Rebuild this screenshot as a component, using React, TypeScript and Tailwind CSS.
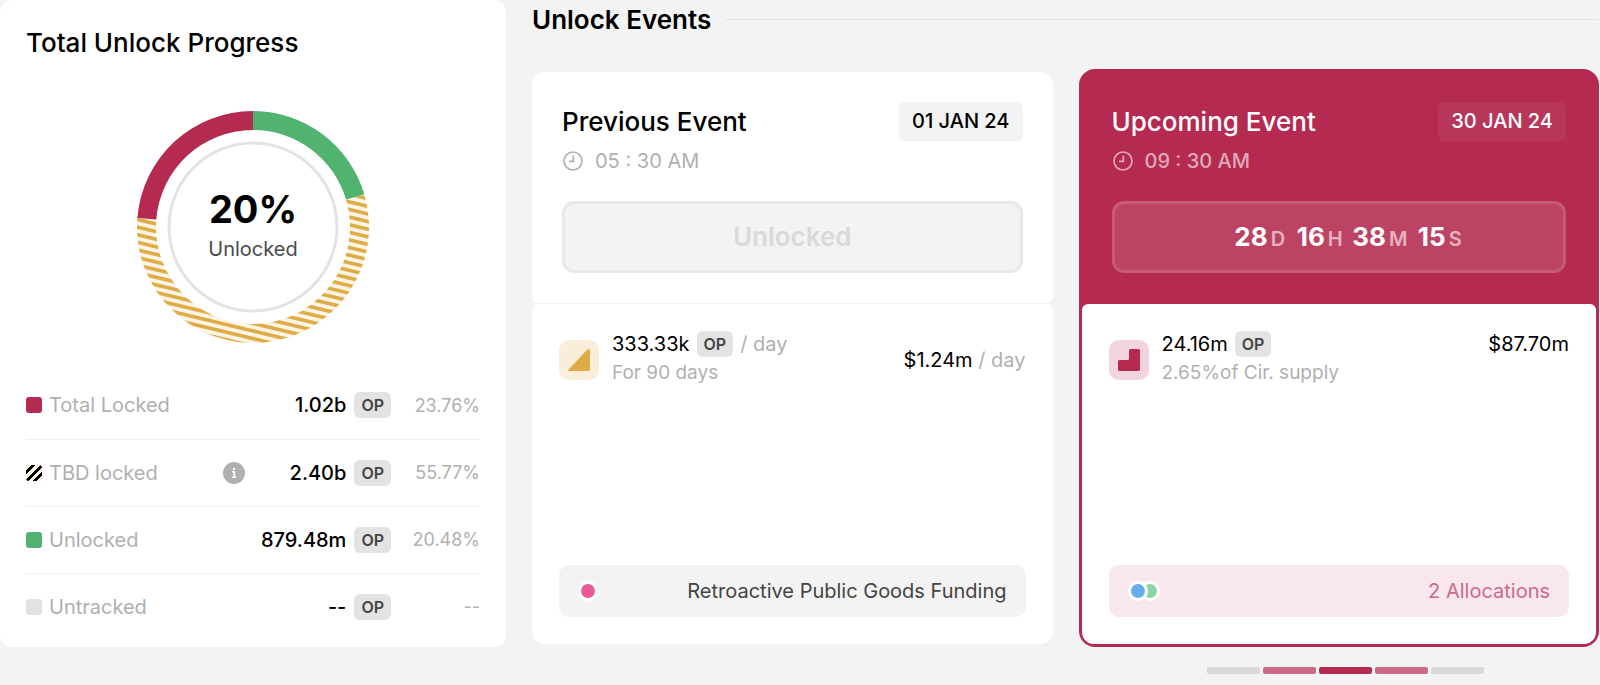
import clsx from 'clsx';
import type { ReactNode } from 'react';

interface ProgressRow {
  label: string;
  value: string;
  percent: string;
  swatch: string;
  info?: boolean;
}

const rows: ProgressRow[] = [
  { label: 'Total Locked', value: '1.02b', percent: '23.76%', swatch: 'bg-[#b42a50]' },
  {
    label: 'TBD locked',
    value: '2.40b',
    percent: '55.77%',
    swatch: 'bg-[repeating-linear-gradient(135deg,#000_0px,#000_1px,#faf3e0_1px,#faf3e0_4px,#000_4px,#000_6px)]',
    info: true,
  },
  { label: 'Unlocked', value: '879.48m', percent: '20.48%', swatch: 'bg-[#52b371]' },
  { label: 'Untracked', value: '--', percent: '--', swatch: 'bg-[#e2e2e2]' },
];

const countdown = [
  { value: '28', unit: 'D' },
  { value: '16', unit: 'H' },
  { value: '38', unit: 'M' },
  { value: '15', unit: 'S' },
];

const pages = ['bg-[#d9d9d9]', 'bg-[#cb6b88]', 'bg-[#b42a50]', 'bg-[#cb6b88]', 'bg-[#d9d9d9]'];

// Ring segment between two fractions of the full circle, starting at 12 o'clock
function arc(from: number, to: number, outer = 116, inner = 97) {
  const point = (fraction: number, radius: number) => {
    const angle = fraction * Math.PI * 2;
    return `${(116 + radius * Math.sin(angle)).toFixed(2)} ${(116 - radius * Math.cos(angle)).toFixed(2)}`;
  };
  const large = to - from > 0.5 ? 1 : 0;
  return `M${point(from, outer)}A${outer} ${outer} 0 ${large} 1 ${point(to, outer)}L${point(to, inner)}A${inner} ${inner} 0 ${large} 0 ${point(from, inner)}Z`;
}

function Donut() {
  return (
    <div className="relative mx-auto mt-[52px] size-[232px]">
      <svg viewBox="0 0 232 232" className="size-full" aria-hidden="true">
        <defs>
          <pattern id="tbd" width="8" height="7.4" patternUnits="userSpaceOnUse" patternTransform="rotate(13.5)">
            <rect width="8" height="7.4" fill="#fcf5e7" />
            <rect width="8" height="3.6" fill="#dfab45" />
          </pattern>
        </defs>
        <path d={arc(0, 0.2048)} fill="#52b371" />
        <path d={arc(0.2048, 0.7624)} fill="url(#tbd)" />
        <path d={arc(0.7624, 1)} fill="#b42a50" />
        <circle cx="116" cy="116" r="84" fill="none" stroke="#e3e3e3" strokeWidth="3" />
      </svg>
      <div className="absolute inset-0 flex flex-col items-center justify-center pb-1">
        <span className="text-[38px] leading-[48px] font-bold">20%</span>
        <span className="text-[20px] leading-8 text-[#4a4a4a]">Unlocked</span>
      </div>
    </div>
  );
}

function TokenChip() {
  return (
    <span className="inline-flex h-[26px] items-center rounded-md bg-[#e3e3e3] px-[7px] text-[16px] font-semibold text-[#444]">
      OP
    </span>
  );
}

function InfoIcon() {
  return (
    <svg viewBox="0 0 22 22" className="size-[22px]" aria-hidden="true">
      <circle cx="11" cy="11" r="11" fill="#b0b0b0" />
      <circle cx="11" cy="6.9" r="1.2" fill="#fff" />
      <path d="M9.2 9.9h2.1v5.2M9.2 15.3h3.8" fill="none" stroke="#fff" strokeWidth="1.6" />
    </svg>
  );
}

function ClockIcon() {
  return (
    <svg viewBox="0 0 22 22" className="size-[22px]" fill="none" stroke="currentColor" strokeWidth="1.7" aria-hidden="true">
      <circle cx="11" cy="11" r="9" />
      <path d="M11.3 5.8v5.6H7" />
    </svg>
  );
}

function ProgressCard() {
  return (
    <section className="self-start rounded-xl bg-white px-[26px] pt-[27px] pb-[7px]">
      <h2 className="text-[26px] leading-8 font-medium">Total Unlock Progress</h2>
      <Donut />
      <table className="mt-[29px] w-full text-[20px]">
        <tbody>
          {rows.map((row) => (
            <tr key={row.label} className="h-[67px] border-b border-[#efefef] last:border-b-0">
              <th scope="row" className="p-0 text-left font-normal text-[#b0b0b0]">
                <span className="flex items-center gap-[7px]">
                  <span className={clsx('size-4 shrink-0 rounded-[3px]', row.swatch)} />
                  <span className="flex-1">{row.label}</span>
                  {row.info && (
                    <button type="button" aria-label="About TBD locked">
                      <InfoIcon />
                    </button>
                  )}
                </span>
              </th>
              <td className="w-[146px] p-0">
                <span className="flex items-center justify-end gap-2 font-medium">
                  {row.value}
                  <TokenChip />
                </span>
              </td>
              <td className="w-[89px] p-0 text-right text-[18px] text-[#b0b0b0]">{row.percent}</td>
            </tr>
          ))}
        </tbody>
      </table>
    </section>
  );
}

interface EventCardProps {
  title: string;
  date: string;
  time: string;
  active?: boolean;
  status: ReactNode;
  children: ReactNode;
}

function EventCard({ title, date, time, active, status, children }: EventCardProps) {
  return (
    <article
      className={clsx(
        'flex flex-col',
        active ? 'rounded-2xl border-3 border-[#b42a50] bg-[#b42a50]' : 'gap-px border-y-3 border-transparent'
      )}
    >
      <header
        className={clsx('px-[30px] pt-[30px]', active ? 'pb-[31px] text-white' : 'rounded-t-xl rounded-b-md bg-white pb-[30px]')}
      >
        <div className="flex items-center justify-between">
          <h3 className="text-[26px] leading-[38px] font-medium">{title}</h3>
          <time
            className={clsx(
              'rounded-md px-[13px] text-[20px] leading-[39px] font-medium',
              active ? 'bg-white/6' : 'bg-[#f3f3f3]'
            )}
          >
            {date}
          </time>
        </div>
        <p
          className={clsx(
            'mt-2 flex items-center gap-[11px] text-[20px] leading-6',
            active ? 'font-medium text-white/60' : 'text-[#b0b0b0]'
          )}
        >
          <ClockIcon />
          {time}
        </p>
        {status}
      </header>
      <div className="flex min-h-[340px] flex-1 flex-col justify-between rounded-t-md rounded-b-xl bg-white p-[27px]">
        {children}
      </div>
    </article>
  );
}

function Dot({ className }: { className: string }) {
  return <span className={clsx('size-5 rounded-full border-3 border-white', className)} />;
}

export default function App() {
  return (
    <main className="grid min-h-screen grid-cols-[506fr_1067fr] gap-[26px] bg-[#f3f3f3] pr-px font-[Inter,sans-serif] text-black">
      <ProgressCard />

      <section>
        <div className="mb-[30px] flex items-center gap-[14px]">
          <h2 className="text-[26px] leading-[39px] font-semibold">Unlock Events</h2>
          <hr className="flex-1 border-[#e6e6e6]" />
        </div>

        <div className="grid grid-cols-2 gap-[26px]">
          <EventCard
            title="Previous Event"
            date="01 JAN 24"
            time="05 : 30 AM"
            status={
              <button
                type="button"
                disabled
                className="mt-7 h-[72px] w-full rounded-xl border-3 border-[#e8e8e8] bg-[#f3f3f3] pb-0.5 text-[26px] font-semibold text-[#d9d9db]"
              >
                Unlocked
              </button>
            }
          >
            <div className="flex items-center text-[20px]">
              <span className="flex size-10 items-center justify-center rounded-[10px] bg-[#faeeda]">
                <svg viewBox="0 0 22 22" className="size-[22px]" fill="#dfab45" aria-hidden="true">
                  <path d="M20.4 0Q22 0 22 1.6V20.5Q22 22 20.5 22H1Q-.6 22 .5 20.6L19.4 .5Q19.9 0 20.4 0Z" />
                </svg>
              </span>
              <div className="ml-[13px] flex-1">
                <p className="flex h-[26px] items-center gap-[7px]">
                  333.33k <TokenChip /> <span className="text-[#b0b0b0]">/ day</span>
                </p>
                <p className="text-[19px] leading-8 text-[#b0b0b0]">For 90 days</p>
              </div>
              <p>
                $1.24m <span className="text-[#b0b0b0]">/ day</span>
              </p>
            </div>
            <button type="button" className="flex h-[52px] items-center justify-between rounded-[10px] bg-[#f3f3f3] px-[19px] text-[20px] text-[#444]">
              <Dot className="bg-[#e85b98]" />
              Retroactive Public Goods Funding
            </button>
          </EventCard>

          <EventCard
            active
            title="Upcoming Event"
            date="30 JAN 24"
            time="09 : 30 AM"
            status={
              <div
                role="timer"
                className="mt-7 flex h-[72px] items-center justify-center rounded-xl border-3 border-white/12 bg-white/12 bg-clip-border pb-0.5 pl-[22px]"
              >
                {countdown.map((part) => (
                  <span key={part.unit} className="flex w-[60px] items-baseline justify-center gap-[3px] text-[26px] font-bold">
                    {part.value}
                    <span className="text-[20px] font-semibold text-white/60">{part.unit}</span>
                  </span>
                ))}
              </div>
            }
          >
            <div className="flex items-center text-[20px]">
              <span className="flex size-10 items-center justify-center rounded-[10px] bg-[#f1d4dd]">
                <svg viewBox="0 0 22 22" className="size-[22px]" fill="#b42a50" aria-hidden="true">
                  <path d="M12.5 0H20.5Q22 0 22 1.5V20.5Q22 22 20.5 22H1.5Q0 22 0 20.5V12.5Q0 11 1.5 11H9.5Q11 11 11 9.5V1.5Q11 0 12.5 0Z" />
                </svg>
              </span>
              <div className="ml-[13px] flex-1">
                <p className="flex h-[26px] items-center gap-[7px]">
                  24.16m <TokenChip />
                </p>
                <p className="text-[19px] leading-8 text-[#b0b0b0]">2.65%of Cir. supply</p>
              </div>
              <p className="self-start leading-[26px]">$87.70m</p>
            </div>
            <button type="button" className="flex h-[52px] items-center justify-between rounded-[10px] bg-[#f8e8ed] px-[19px] text-[20px] text-[#cb6b88]">
              <span className="flex flex-row-reverse -space-x-2 space-x-reverse">
                <Dot className="bg-[#8bd6a5]" />
                <Dot className="relative bg-[#65adec]" />
              </span>
              2 Allocations
            </button>
          </EventCard>
        </div>

        <nav aria-label="Events" className="mt-5 flex justify-end gap-[3px] pr-[115px]">
          {pages.map((color, i) => (
            <button key={i} type="button" aria-label={`Page ${i + 1}`} className={clsx('h-[7px] w-[53px] rounded-xs', color)} />
          ))}
        </nav>
      </section>
    </main>
  );
}
